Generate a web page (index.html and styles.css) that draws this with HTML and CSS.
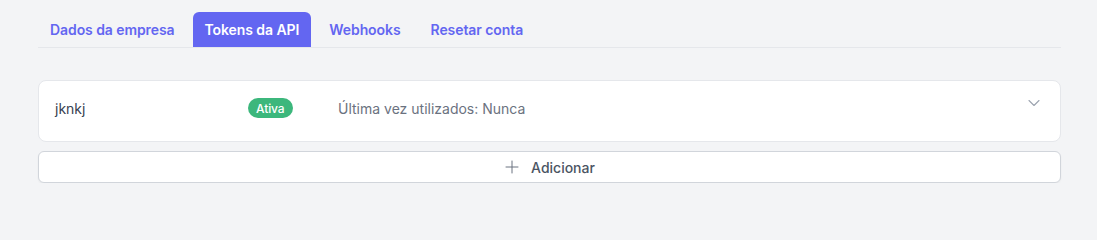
FILE: index.html
```html
<!DOCTYPE html>
<html lang="pt">
<head>
<meta charset="utf-8">
<title>Tokens da API</title>
<link rel="stylesheet" href="styles.css">
</head>
<body>
<div class="page">
  <nav class="tabs">
    <a class="tab">Dados da empresa</a>
    <a class="tab active">Tokens da API</a>
    <a class="tab">Webhooks</a>
    <a class="tab">Resetar conta</a>
  </nav>
  <section class="tokens">
    <div class="card">
      <div class="row">
        <span class="name">jknkj</span>
        <span class="status"><span class="badge">Ativa</span></span>
        <span class="last">Última vez utilizados: Nunca</span>
        <svg class="chevron" viewBox="0 0 24 24" width="16" height="16" fill="none" stroke="currentColor" stroke-width="1.6" stroke-linecap="round" stroke-linejoin="round"><path d="M19.5 8.25l-7.5 7.5-7.5-7.5"/></svg>
      </div>
    </div>
    <button class="add" type="button">
      <svg class="plus" viewBox="0 0 24 24" width="16" height="16" fill="none" stroke="currentColor" stroke-width="1.5" stroke-linecap="round"><path d="M12 3v18M3 12h18"/></svg>
      <span>Adicionar</span>
    </button>
  </section>
</div>
</body>
</html>
```

FILE: styles.css
```css
* { box-sizing: border-box; }
html, body { margin: 0; padding: 0; }
body {
  background: #f3f4f6;
  font-family: Inter, "Noto Sans", "Liberation Sans", sans-serif;
  font-size: 14px;
  color: #374151;
}
.page {
  padding: 12px 36px 0 38px;
}
.tabs {
  display: flex;
  gap: 6px;
  border-bottom: 1px solid #e5e7eb;
  height: 36px;
}
.tab {
  display: flex;
  align-items: center;
  height: 35px;
  padding: 0 12px;
  font-weight: 600;
  font-size: 14px;
  letter-spacing: -0.08px;
  color: #6366f1;
  border-radius: 6px 6px 0 0;
  cursor: pointer;
}
.tab.active {
  background: #6366f1;
  color: #ffffff;
}
.tokens {
  margin-top: 32px;
  display: flex;
  flex-direction: column;
  gap: 9px;
}
.card {
  background: #ffffff;
  border: 1px solid #e5e7eb;
  border-radius: 8px;
  padding: 17px 18px 23px 16px;
}
.row {
  display: grid;
  grid-template-columns: 193px 90px 1fr 16px;
  align-items: center;
  height: 20px;
}
.name {
  color: #374151;
  font-size: 14px;
}
.badge {
  display: inline-flex;
  align-items: center;
  height: 20px;
  padding: 0 8px;
  border-radius: 999px;
  background: #3cb77c;
  color: #ffffff;
  font-size: 12px;
  font-weight: 500;
  letter-spacing: -0.1px;
}
.last {
  color: #6b7280;
  font-size: 14px;
}
.chevron {
  color: #9ca3af;
  align-self: start;
  margin-top: -3px;
}
.add {
  display: flex;
  align-items: center;
  justify-content: center;
  gap: 11px;
  height: 32px;
  width: 100%;
  background: #ffffff;
  border: 1px solid #d1d5db;
  border-radius: 6px;
  box-shadow: 0 1px 2px rgba(0,0,0,0.05);
  font-family: inherit;
  font-size: 14px;
  font-weight: 500;
  color: #4b5563;
  padding: 0;
}
.plus {
  color: #6b7280;
}
```
